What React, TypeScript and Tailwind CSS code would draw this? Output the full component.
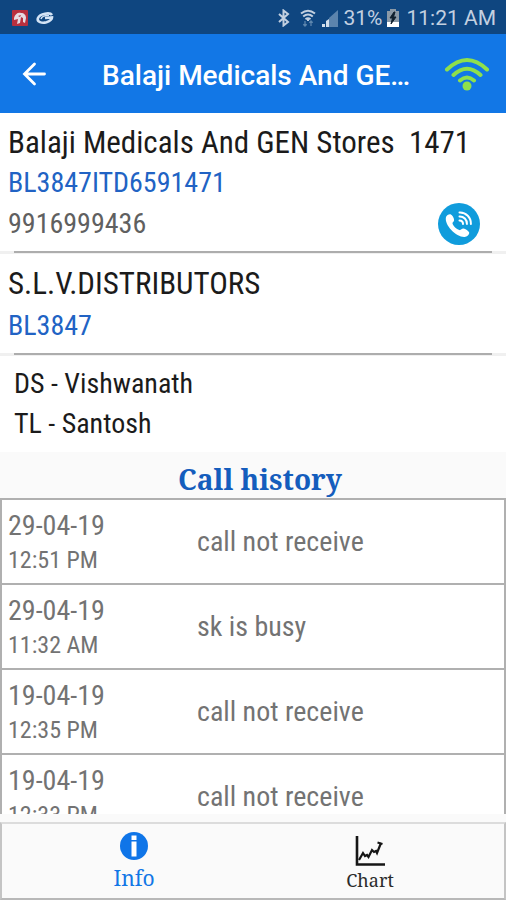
import { useState } from 'react'

type Call = { date: string; time: string; remark: string }

const calls: Call[] = [
  { date: '29-04-19', time: '12:51 PM', remark: 'call not receive' },
  { date: '29-04-19', time: '11:32 AM', remark: 'sk is busy' },
  { date: '19-04-19', time: '12:35 PM', remark: 'call not receive' },
  { date: '19-04-19', time: '12:33 PM', remark: 'call not receive' },
]

function StatusBar() {
  return (
    <div className="flex h-[34px] shrink-0 items-center bg-[#0f4680] pt-0.5 pr-2.5 pl-3 text-[21px] leading-6 text-[#c3d0e0]">
      <svg viewBox="0 0 16 16" className="size-4">
        <rect width="16" height="16" rx="1" fill="#b8303f" />
        <path d="M2 8C3 4 6 2 9 3c3 0 5 2 5 5l-1 5-2-1V8L9 7l-1 6-3 1 1-5-4 1z" fill="#e6dbe3" />
        <path d="M6 6l3-1-1 2z" fill="#b8303f" />
      </svg>
      <svg viewBox="0 0 18 14" className="ml-2 h-[14px] w-[18px]" fill="none" stroke="#d3e3f5">
        <path d="M16 4C14 1 4 2.500 2 7c-1.500 4 4 5.500 8.500 4.200C14 10 16 8 16 6.500L9 7" strokeWidth="2.600" />
        <path d="M13 4.500c-4-.5-7.500 1-8 3.500" strokeWidth="1.500" />
      </svg>
      <svg viewBox="0 0 14 18" className="ml-auto h-[18px] w-[14px]" fill="none" stroke="#c3d0e0" strokeWidth="2">
        <path d="M2 5l9 8-4.500 3.500v-15L11 5l-9 8" />
      </svg>
      <svg viewBox="0 0 18 20" className="ml-2 h-5 w-[18px]" fill="none" stroke="#c3d0e0" strokeWidth="2">
        <path d="M2 5.500q7-5.500 14 0M4.200 8.500q4.800-4 9.600 0M6.500 11.300q2.500-2 5 0" />
        <path d="M9 11v2" />
        <path d="M6 13v5M4.300 16.300L6 18l1.700-1.700M12 18v-5m-1.700 1.700L12 13l1.700 1.700" stroke="#5d86ad" strokeWidth="1.300" />
      </svg>
      <svg viewBox="0 0 18 18" className="ml-1 size-[18px]">
        <path d="M1 15h3v3H1zM5 12h3v6H5z" fill="#d3dfec" />
        <path d="M8 18V9l9-8v17z" fill="#5c84ad" />
        <path d="M5 12l3-2v8H5z" fill="#d3dfec" />
      </svg>
      <span className="ml-1">31%</span>
      <svg viewBox="0 0 14 18" className="ml-1 h-[18px] w-[14px]">
        <path d="M4 0h6v2h3v16H1V2h3z" fill="#8b99a6" />
        <path d="M1 13h12v5H1z" fill="#fff" />
        <path d="M8 3L4 9h2.500L5 15l5-7H7.500L9 3z" fill="#10202e" stroke="#10202e" />
      </svg>
      <span className="ml-1.5">11:21 AM</span>
    </div>
  )
}

function Header() {
  return (
    <header className="flex h-[79px] shrink-0 items-center bg-[#1277e6] pr-4 pl-[22px]">
      <button type="button" aria-label="Back" className="text-white">
        <svg viewBox="0 0 24 24" className="size-6" fill="none" stroke="currentColor" strokeWidth="2.800" strokeLinecap="round">
          <path d="M22.500 12H3M12.500 2L2.500 12l10 10" />
        </svg>
      </button>
      <h1 className="ml-14 flex-1 truncate pt-1 text-[28px] leading-8 font-medium text-white">
        Balaji Medicals And GE…
      </h1>
      <svg viewBox="0 0 46 34" className="ml-6 h-[34px] w-[46px]" fill="none" stroke="#8fe04c" strokeWidth="4" strokeLinecap="round">
        <path d="M3 12.500Q23-6.500 43 12.500M9.500 18Q23 5.500 36.500 18M16 23.500q7-6 14 0" />
        <circle cx="23" cy="29" r="4.500" fill="#8fe04c" stroke="none" />
      </svg>
    </header>
  )
}

function CallBadge() {
  return (
    <button type="button" aria-label="Call" className="mr-[18px]">
      <svg viewBox="0 0 42 42" className="size-[42px]">
        <circle cx="21" cy="21" r="21" fill="#109cdc" />
        <path
          d="M8 14c.5-1.800 3-3.200 4.500-2.800 2 .8 3.600 4 3.600 6 0 1.600-2 2-1.600 3.400.8 2.600 4 5.700 6.800 6.500 1.600.4 2.400-1.600 4.100-1.500 2.200.2 5 2.200 5.800 4 .3 2.200-2.200 4.200-4.600 4.400-4 .3-9.500-3-13.300-7S7 18 8 14z"
          fill="#fff"
        />
        <g fill="none" stroke="#fff" strokeWidth="2" strokeLinecap="round">
          <path d="M21.500 9.500c6.500-.3 11.700 5 11.400 11.500M21.500 13.500c4.200-.2 7.600 3.200 7.400 7.400M21.500 17.400c2 0 3.500 1.500 3.500 3.500" />
        </g>
      </svg>
    </button>
  )
}

function Divider() {
  return (
    <div className="flex h-[3px] shrink-0 bg-[#f0f0f0] px-3.5">
      <div className="h-0.5 w-full bg-[#adadad]" />
    </div>
  )
}

function CallRow({ call }: { call: Call }) {
  return (
    <tr className="h-[85px] border-2 border-[#b0b0b0] bg-white text-[#737373]">
      <td className="w-[196px] pl-1.5 align-top">
        <div className="mt-2 text-[28px] leading-9">{call.date}</div>
        <div className="text-2xl leading-8">{call.time}</div>
      </td>
      <td className="text-[28px] leading-9">{call.remark}</td>
    </tr>
  )
}

function App() {
  const [tab, setTab] = useState<'info' | 'chart'>('info')

  return (
    <div className="flex h-screen flex-col overflow-hidden bg-[#fafafa] font-[Roboto,sans-serif]">
      <StatusBar />
      <Header />

      <main className="flex min-h-0 flex-1 flex-col font-['Roboto_Condensed','Roboto',sans-serif] text-[28px] leading-10 text-[#1b1b1b]">
        <section className="shrink-0 bg-white px-2 pt-2.5 pb-1.5">
          <h2 className="text-[31px] whitespace-pre">Balaji Medicals And GEN Stores  1471</h2>
          <p className="text-[#2163c4]">BL3847ITD6591471</p>
          <div className="flex items-center justify-between text-[#606060]">
            <span>9916999436</span>
            <CallBadge />
          </div>
        </section>
        <Divider />
        <section className="shrink-0 bg-white px-2 pt-2.5 pb-[7px]">
          <h2 className="text-[31px]">S.L.V.DISTRIBUTORS</h2>
          <p className="pt-0.5 text-[#2163c4]">BL3847</p>
        </section>
        <Divider />
        <section className="shrink-0 bg-white px-3.5 pt-2 pb-2">
          <p>DS - Vishwanath</p>
          <p>TL - Santosh</p>
        </section>

        <h2 className="shrink-0 pt-2 pl-3.5 text-center font-['Noto_Serif','DejaVu_Serif',serif] text-[28px] leading-[38px] font-bold text-[#145dbd]">
          Call history
        </h2>
        <div className="min-h-0 flex-1 overflow-y-auto [scrollbar-width:none]">
          <table className="w-full border-collapse">
            <tbody>
              {calls.map((call) => (
                <CallRow key={call.date + call.time} call={call} />
              ))}
            </tbody>
          </table>
        </div>
      </main>

      <nav className="mt-2 flex h-[78px] shrink-0 border-2 border-t-[#dcdcdc] border-r-[#c4c4c4] border-b-[#b8b8b8] border-l-[#c4c4c4] font-['Noto_Serif','DejaVu_Serif',serif]">
        <button type="button" onClick={() => setTab('info')} aria-pressed={tab === 'info'} className="flex flex-1 flex-col items-center justify-start gap-0.5 pt-2 pl-3.5 text-[21px] leading-8 text-[#1277e6]">
          <svg viewBox="0 0 28 28" className="size-7">
            <circle cx="14" cy="14" r="14" fill="#0f75e8" />
            <path d="M11.500 3.500h5V8h-5zM11.500 9.500h5v15h-5z" fill="#fff" />
          </svg>
          Info
        </button>
        <button type="button" onClick={() => setTab('chart')} aria-pressed={tab === 'chart'} className="flex flex-1 flex-col items-center justify-start pt-3 pr-4 text-lg leading-7 text-[#2b2b2b]">
          <svg viewBox="0 0 30 30" className="size-[30px]" fill="none" stroke="#161616">
            <path d="M2 0v28.500h28" strokeWidth="2.600" />
            <path d="M4 24l4-7 2 3 2-1 1.500 2 3.500-7 2 2 2-1 1 2L26 7" strokeWidth="2.200" />
            <path d="M22.500 6.500l5 1.500" strokeWidth="2" />
          </svg>
          Chart
        </button>
      </nav>
    </div>
  )
}

export default App
